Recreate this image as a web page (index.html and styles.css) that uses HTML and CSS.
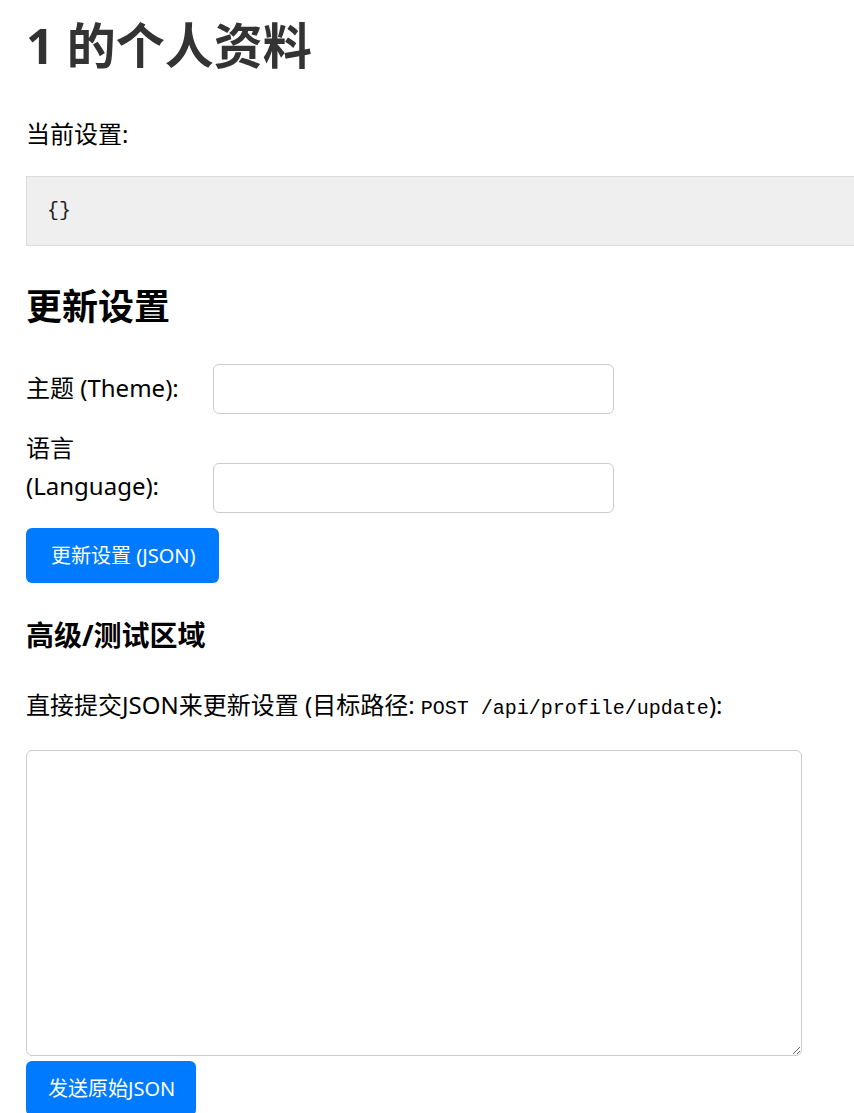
FILE: index.html
```html
<!DOCTYPE html>
<html lang="zh-CN">
<head>
<meta charset="utf-8">
<title>1 的个人资料</title>
<link rel="stylesheet" href="styles.css">
</head>
<body>
<div class="page">
  <h1 class="title">1 的个人资料</h1>
  <p class="text">当前设置:</p>
  <pre class="current">{}</pre>

  <h2 class="section">更新设置</h2>
  <form class="settings">
    <div class="row">
      <label class="label" for="theme">主题 (Theme):</label>
      <input class="field" id="theme" type="text">
    </div>
    <div class="row">
      <label class="label" for="lang">语言 (Language):</label>
      <input class="field" id="lang" type="text">
    </div>
    <button class="btn" type="button">更新设置 (JSON)</button>
  </form>

  <h3 class="sub">高级/测试区域</h3>
  <p class="text para">直接提交JSON来更新设置 (目标路径: <code class="code">POST /api/profile/update</code>):</p>
  <textarea class="raw"></textarea>
  <button class="btn btn-raw" type="button">发送原始JSON</button>
</div>
</body>
</html>
```

FILE: styles.css
```css
html, body {
  overflow-x: hidden;
}

body {
  margin: 0;
  padding: 16px 26px;
  font-family: "Noto Sans", "Noto Sans CJK SC", sans-serif;
  font-size: 24px;
  line-height: 38px;
  color: #000;
  background: #fff;
}

.page {
  width: 900px;
}

.title {
  margin: 0 0 41px;
  font-size: 49px;
  line-height: 58px;
  font-weight: 700;
  color: #333;
}

.text {
  margin: 0 0 23px;
}

.current {
  margin: 0;
  padding: 20px;
  font-family: "Liberation Mono", monospace;
  font-size: 20px;
  line-height: 28px;
  color: #222;
  background: #efefef;
  border: 1px solid #dcdcdc;
}

.section {
  margin: 39px 0 35px;
  font-size: 36px;
  line-height: 44px;
  font-weight: 700;
}

.settings {
  margin: 0;
}

.row {
  margin-bottom: 15px;
}

.label {
  display: inline-block;
  width: 181px;
}

.field {
  width: 401px;
  height: 50px;
  box-sizing: border-box;
  border: 1px solid #ccc;
  border-radius: 6px;
  padding: 0 12px;
  font-family: inherit;
  font-size: 20px;
  vertical-align: baseline;
}

.btn {
  display: block;
  margin: 0;
  padding: 14px 24px 13px 25px;
  font-family: "Noto Sans", "Noto Sans CJK SC", sans-serif;
  font-size: 20px;
  line-height: 28px;
  color: #fff;
  background: #007bff;
  border: none;
  border-radius: 6px;
}

.btn-raw {
  padding-left: 22px;
  padding-right: 21px;
}

.sub {
  margin: 35px 0 34px;
  font-size: 28px;
  line-height: 34px;
  font-weight: 700;
}

.para {
  margin-bottom: 22px;
}

.code {
  font-family: "Liberation Mono", monospace;
  font-size: 20px;
}

.raw {
  display: block;
  width: 776px;
  height: 306px;
  box-sizing: border-box;
  margin: 0 0 5px;
  border: 1px solid #ccc;
  border-radius: 6px;
  padding: 10px;
  font-family: "Liberation Mono", monospace;
  font-size: 20px;
}
```
